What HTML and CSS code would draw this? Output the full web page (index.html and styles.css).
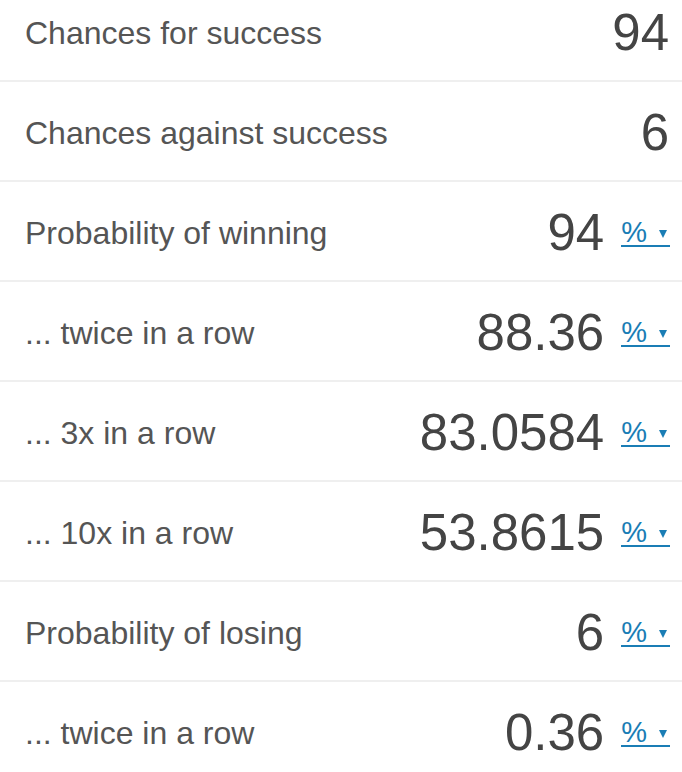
FILE: index.html
```html
<!DOCTYPE html>
<html>
<head>
<meta charset="utf-8">
<link rel="stylesheet" href="styles.css">
</head>
<body>
<div class="list">
  <div class="row"><span class="label">Chances for success</span><span class="value">94</span></div>
  <div class="row"><span class="label">Chances against success</span><span class="value">6</span></div>
  <div class="row"><span class="label">Probability of winning</span><span class="value">94</span><a class="unit" href="#">%<span class="caret"></span></a></div>
  <div class="row"><span class="label">... twice in a row</span><span class="value">88.36</span><a class="unit" href="#">%<span class="caret"></span></a></div>
  <div class="row"><span class="label">... 3x in a row</span><span class="value">83.0584</span><a class="unit" href="#">%<span class="caret"></span></a></div>
  <div class="row"><span class="label">... 10x in a row</span><span class="value">53.8615</span><a class="unit" href="#">%<span class="caret"></span></a></div>
  <div class="row"><span class="label">Probability of losing</span><span class="value">6</span><a class="unit" href="#">%<span class="caret"></span></a></div>
  <div class="row"><span class="label">... twice in a row</span><span class="value">0.36</span><a class="unit" href="#">%<span class="caret"></span></a></div>
</div>
</body>
</html>
```
FILE: styles.css
```css
html, body {
  margin: 0;
  padding: 0;
  background: #fff;
}
body {
  font-family: "Liberation Sans", Arial, sans-serif;
  overflow: hidden;
}
.list {
  margin-top: -18px;
}
.row {
  display: flex;
  align-items: center;
  height: 98px;
  border-bottom: 2px solid #efefef;
  padding: 0 12px 0 25px;
}
.label {
  flex: 1;
  font-size: 32px;
  color: #555;
  padding-top: 4px;
}
.value {
  font-size: 51px;
  color: #444;
  padding-top: 2px;
}
.row > .value:last-child {
  margin-right: 1px;
}
.unit {
  margin-left: 17px;
  color: #1a7db5;
  font-size: 29px;
  line-height: 26px;
  text-decoration: none;
  border-bottom: 2px solid #1a7db5;
  display: inline-flex;
  align-items: center;
  padding-right: 3px;
  margin-top: 4px;
}
.caret {
  display: inline-block;
  width: 0;
  height: 0;
  border-left: 4.5px solid transparent;
  border-right: 4.5px solid transparent;
  border-top: 8px solid #1a7db5;
  margin-left: 12px;
  margin-top: 3px;
}
```
